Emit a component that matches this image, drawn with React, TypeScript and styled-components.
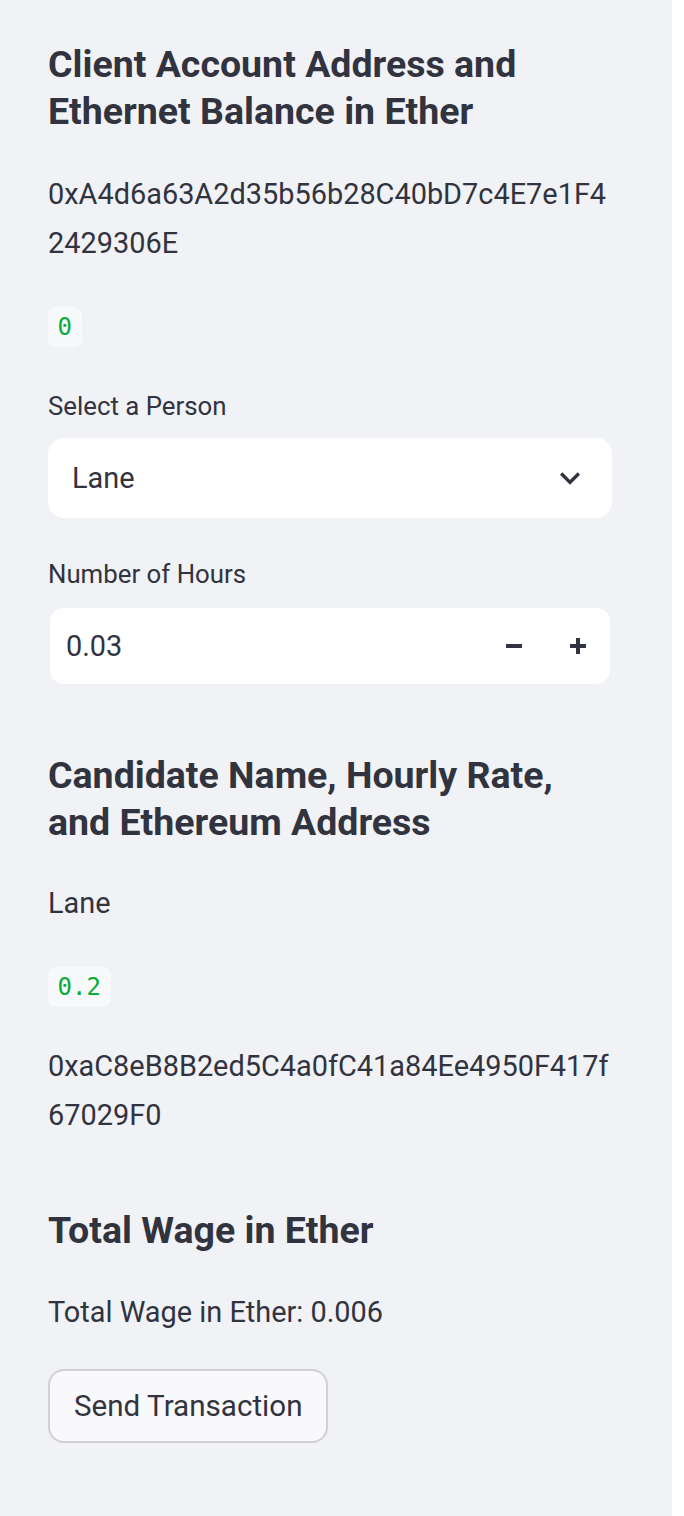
import React from "react";
import styled, { createGlobalStyle } from "styled-components";

const GlobalStyle = createGlobalStyle`
  html, body {
    margin: 0;
    padding: 0;
    background: #ffffff;
  }
  body {
    font-family: Roboto, "Liberation Sans", sans-serif;
    color: #31333f;
    -webkit-font-smoothing: antialiased;
  }
  * { box-sizing: border-box; }
`;

const Page = styled.div`
  display: flex;
  width: 684px;
  min-height: 1516px;
`;

const Sidebar = styled.aside`
  width: 672px;
  min-height: 1516px;
  background: #f0f2f6;
  padding: 41px 60px 0 48px;
  display: flex;
  flex-direction: column;
  align-items: stretch;
`;

const Main = styled.main`
  flex: 1;
  background: #ffffff;
`;

type Spaced = { $mt?: number };

const Heading = styled.h3<Spaced>`
  margin: ${(p) => p.$mt ?? 0}px 0 0;
  font-family: Roboto, "Liberation Sans", sans-serif;
  font-weight: 700;
  font-size: 37.5px;
  line-height: 47px;
  color: #31333f;
`;

const Paragraph = styled.p<Spaced>`
  margin: ${(p) => p.$mt ?? 0}px 0 0;
  font-size: 28.9px;
  line-height: 49px;
  color: #31333f;
  word-break: break-all;
`;

const CodeRow = styled.div<Spaced>`
  margin-top: ${(p) => p.$mt ?? 0}px;
  display: flex;
`;

const Code = styled.code`
  font-family: "DejaVu Sans Mono", "Liberation Mono", monospace;
  font-size: 24px;
  line-height: 30.4px;
  padding: 4.8px 9.6px;
  background: #f8f9fb;
  color: #09ab3b;
  border-radius: 8px;
`;

const Label = styled.label<Spaced>`
  display: block;
  margin-top: ${(p) => p.$mt ?? 0}px;
  font-size: 25.8px;
  line-height: 30px;
  color: #31333f;
`;

const SelectBox = styled.div<Spaced>`
  margin-top: ${(p) => p.$mt ?? 0}px;
  height: 80px;
  background: #ffffff;
  border-radius: 16px;
  display: flex;
  align-items: center;
  justify-content: space-between;
  padding: 0 22px 0 24px;
  font-size: 28.9px;
  color: #31333f;
`;

const NumberBox = styled.div<Spaced>`
  margin-top: ${(p) => p.$mt ?? 0}px;
  height: 80px;
  background: #ffffff;
  background-clip: padding-box;
  border: 2px solid transparent;
  border-radius: 16px;
  display: flex;
  align-items: stretch;
`;

const NumberValue = styled.div`
  flex: 1;
  display: flex;
  align-items: center;
  padding-left: 16px;
  font-size: 28.9px;
  color: #31333f;
`;

const StepButton = styled.div`
  width: 64px;
  display: flex;
  align-items: center;
  justify-content: center;
`;

const Button = styled.button<Spaced>`
  margin-top: ${(p) => p.$mt ?? 0}px;
  align-self: flex-start;
  height: 74px;
  padding: 0 24px;
  border: 2px solid rgba(49, 51, 63, 0.2);
  border-radius: 16px;
  background: #f9f9fb;
  font-family: Roboto, "Liberation Sans", sans-serif;
  font-size: 29.6px;
  color: #31333f;
`;

const Chevron = () => (
  <svg width="40" height="40" viewBox="0 0 24 24" aria-hidden="true">
    <path
      d="M16.59 8.59L12 13.17 7.41 8.59 6 10l6 6 6-6z"
      fill="#31333f"
    />
  </svg>
);

const Minus = () => (
  <svg width="16" height="16" viewBox="0 0 16 16" aria-hidden="true">
    <rect x="0" y="6" width="16" height="4" fill="#31333f" />
  </svg>
);

const Plus = () => (
  <svg width="16" height="16" viewBox="0 0 16 16" aria-hidden="true">
    <rect x="0" y="6" width="16" height="4" fill="#31333f" />
    <rect x="6" y="0" width="4" height="16" fill="#31333f" />
  </svg>
);

export default function App() {
  return (
    <>
      <GlobalStyle />
      <Page>
        <Sidebar>
          <Heading>Client Account Address and Ethernet Balance in Ether</Heading>
          <Paragraph $mt={35}>0xA4d6a63A2d35b56b28C40bD7c4E7e1F42429306E</Paragraph>
          <CodeRow $mt={39}>
            <Code>0</Code>
          </CodeRow>
          <Label $mt={44}>Select a Person</Label>
          <SelectBox $mt={17}>
            <span>Lane</span>
            <Chevron />
          </SelectBox>
          <Label $mt={41}>Number of Hours</Label>
          <NumberBox $mt={17}>
            <NumberValue>0.03</NumberValue>
            <StepButton>
              <Minus />
            </StepButton>
            <StepButton>
              <Plus />
            </StepButton>
          </NumberBox>
          <Heading $mt={66}>Candidate Name, Hourly Rate, and Ethereum Address</Heading>
          <Paragraph $mt={33}>Lane</Paragraph>
          <CodeRow $mt={39}>
            <Code>0.2</Code>
          </CodeRow>
          <Paragraph $mt={35}>0xaC8eB8B2ed5C4a0fC41a84Ee4950F417f67029F0</Paragraph>
          <Heading $mt={67}>Total Wage in Ether</Heading>
          <Paragraph $mt={34}>Total Wage in Ether: 0.006</Paragraph>
          <Button $mt={32}>Send Transaction</Button>
        </Sidebar>
        <Main />
      </Page>
    </>
  );
}
